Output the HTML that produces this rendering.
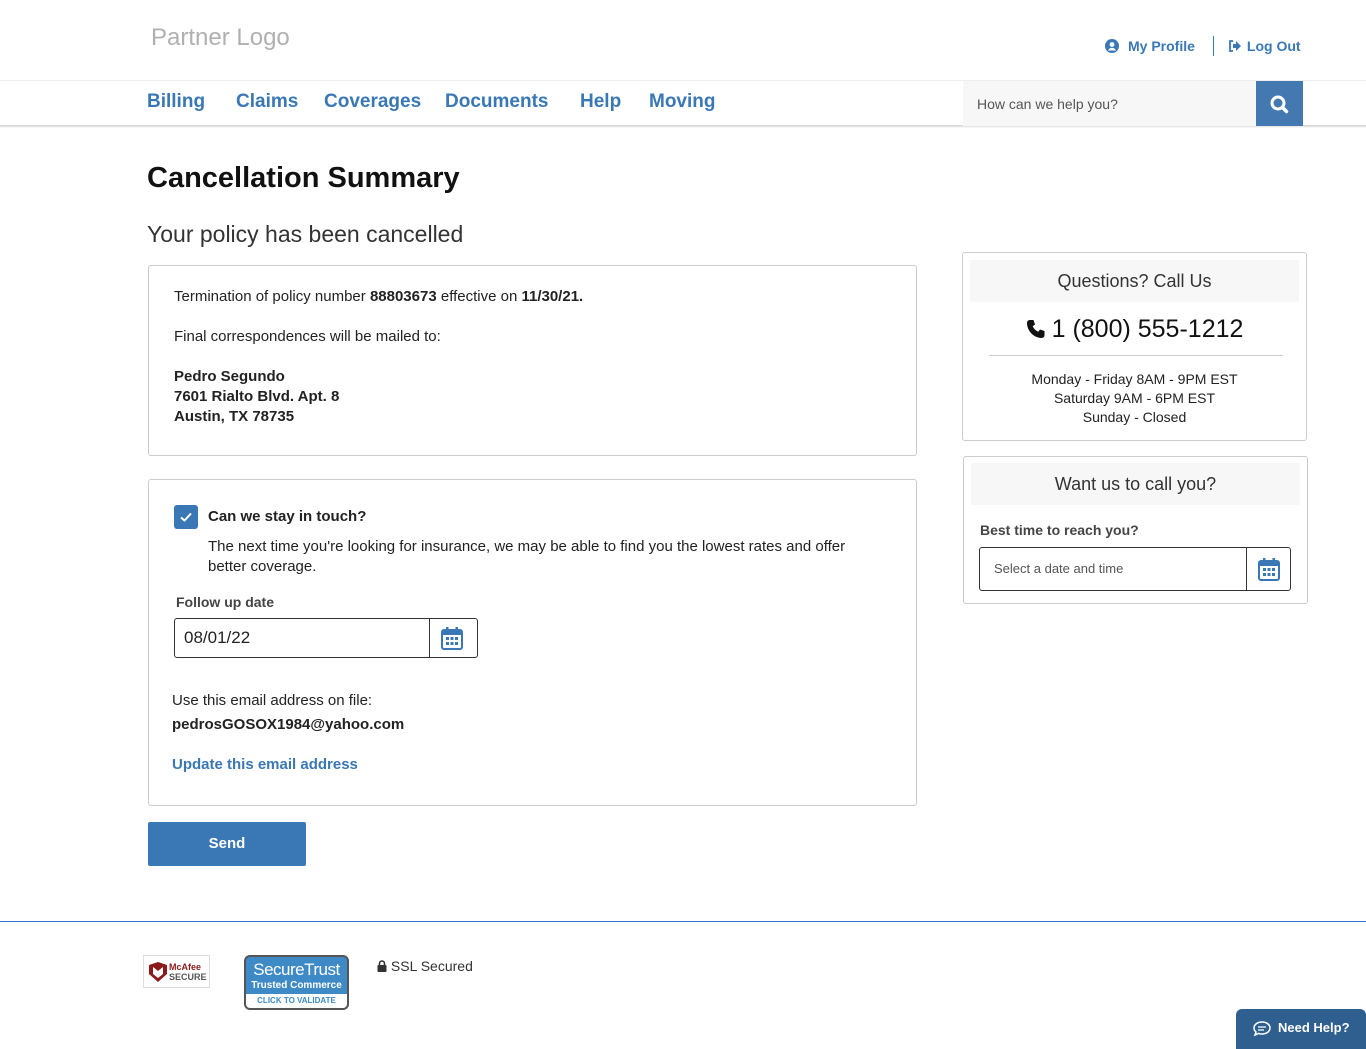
<!DOCTYPE html>
<html><head><meta charset="utf-8"><style>
*{box-sizing:border-box;margin:0;padding:0}
body{width:1366px;height:1044px;position:relative;font-family:"Liberation Sans",sans-serif;color:#222;background:#fff;overflow:hidden}
.abs{position:absolute}
.blue{color:#3a78b5}
.nav a{position:absolute;top:91px;font-size:19px;font-weight:bold;color:#3a78b5;text-decoration:none}
.box{position:absolute;border:1px solid #ccc;border-radius:3px;background:#fff}
.t15{font-size:15px;line-height:20px}
b{font-weight:bold}
</style></head><body>
<div class="abs" style="left:151px;top:24px;font-size:24px;color:#b0b0b0">Partner Logo</div>
<div class="abs blue" style="left:1105px;top:36px;font-size:14px;font-weight:bold;display:flex;align-items:center">
<svg width="14" height="14" viewBox="0 0 14 14"><circle cx="7" cy="7" r="7" fill="#3a78b5"/><circle cx="7" cy="5.5" r="2.4" fill="#fff"/><path d="M3 11.5c1-2 2.5-2.6 4-2.6s3 .6 4 2.6" fill="#fff"/></svg>
<span style="margin-left:9px">My Profile</span>
<span style="display:inline-block;width:1px;height:20px;background:#3a78b5;margin:0 14px 0 18px"></span>
<svg width="13" height="12" viewBox="0 0 13 12"><path d="M5 1H2v10h3" stroke="#3a78b5" stroke-width="1.8" fill="none"/><path d="M5 4h3V1l5 5-5 5V8H5z" fill="#3a78b5"/></svg>
<span style="margin-left:6px">Log Out</span></div>
<div class="abs" style="left:0;top:80px;width:1366px;height:1px;background:#eee"></div>
<div class="abs" style="left:0;top:125px;width:1366px;height:3px;background:linear-gradient(#ccc,#fff)"></div>
<div class="nav"><a style="left:147px">Billing</a><a style="left:236px">Claims</a><a style="left:324px">Coverages</a><a style="left:445px">Documents</a><a style="left:580px">Help</a><a style="left:649px">Moving</a></div>
<div class="abs" style="left:963px;top:81px;width:293px;height:45px;background:#f7f7f7;font-size:14px;color:#555;padding:15px 14px">How can we help you?</div>
<div class="abs" style="left:1256px;top:81px;width:47px;height:45px;background:#4478b0">
<svg width="47" height="45" viewBox="0 0 47 45"><circle cx="22" cy="22" r="6" stroke="#fff" stroke-width="3" fill="none"/><path d="M26.5 26.5l4 4" stroke="#fff" stroke-width="3.5" stroke-linecap="round"/></svg></div>
<div class="abs" style="left:147px;top:162px;font-size:29px;font-weight:bold;color:#111">Cancellation Summary</div>
<div class="abs" style="left:147px;top:221px;font-size:23px;color:#333">Your policy has been cancelled</div>
<div class="box" style="left:148px;top:265px;width:769px;height:191px"></div>
<div class="abs t15" style="left:174px;top:287px">Termination of policy number <b>88803673</b> effective on <b>11/30/21.</b></div>
<div class="abs t15" style="left:174px;top:327px">Final correspondences will be mailed to:</div>
<div class="abs t15" style="left:174px;top:367px;font-weight:bold">Pedro Segundo<br>7601 Rialto Blvd. Apt. 8<br>Austin, TX 78735</div>
<div class="box" style="left:148px;top:479px;width:769px;height:327px"></div>
<div class="abs" style="left:174px;top:505px;width:24px;height:24px;background:#3a78b5;border-radius:3px"><svg width="24" height="24"><path d="M7 12.5l3.5 3 6.5-7" stroke="#fff" stroke-width="2" fill="none"/></svg></div>
<div class="abs t15" style="left:208px;top:507px;font-weight:bold">Can we stay in touch?</div>
<div class="abs t15" style="left:208px;top:537px;width:640px">The next time you're looking for insurance, we may be able to find you the lowest rates and offer better coverage.</div>
<div class="abs" style="left:176px;top:594px;font-size:14px;font-weight:bold;color:#444">Follow up date</div>
<div class="abs" style="left:174px;top:618px;width:304px;height:40px;border:1px solid #333;border-radius:3px;font-size:17px;padding:9px 9px">08/01/22</div>
<div class="abs" style="left:429px;top:619px;width:1px;height:38px;background:#333"></div>
<svg class="abs" style="left:441px;top:626px" width="22" height="24" viewBox="0 0 22 24"><rect x="1" y="4" width="20" height="19" rx="2" fill="none" stroke="#3a78b5" stroke-width="2"/><rect x="1" y="4" width="20" height="5" fill="#3a78b5"/><rect x="5" y="1" width="2.5" height="5" fill="#3a78b5"/><rect x="14.5" y="1" width="2.5" height="5" fill="#3a78b5"/><g fill="#3a78b5"><rect x="5" y="11" width="3" height="3"/><rect x="9.5" y="11" width="3" height="3"/><rect x="14" y="11" width="3" height="3"/><rect x="5" y="16" width="3" height="3"/><rect x="9.5" y="16" width="3" height="3"/><rect x="14" y="16" width="3" height="3"/></g></svg>
<div class="abs t15" style="left:172px;top:691px">Use this email address on file:</div>
<div class="abs t15" style="left:172px;top:715px;font-weight:bold">pedrosGOSOX1984@yahoo.com</div>
<div class="abs t15 blue" style="left:172px;top:755px;font-weight:bold">Update this email address</div>
<div class="abs" style="left:148px;top:822px;width:158px;height:44px;background:#3a78b5;border-radius:2px;color:#fff;font-weight:bold;font-size:15px;text-align:center;line-height:44px">Send</div>
<div class="box" style="left:962px;top:252px;width:345px;height:189px"></div>
<div class="abs" style="left:970px;top:260px;width:329px;height:42px;background:#f7f7f7;text-align:center;font-size:18px;line-height:42px;color:#333">Questions? Call Us</div>
<div class="abs" style="left:962px;top:315px;width:345px;text-align:center;font-size:25px;color:#111"><svg width="20" height="20" viewBox="0 0 20 20" style="vertical-align:-2px;margin-right:6px"><path d="M4 1l3.5 0 1.5 4.5-2.3 1.8c1.2 2.5 3 4.3 5.5 5.5l1.8-2.3 4.5 1.5V16c0 1.5-1 3-3 3C8 19 1 12 1 4c0-2 1.5-3 3-3z" fill="#111"/></svg>1 (800) 555-1212</div>
<div class="abs" style="left:989px;top:355px;width:294px;height:1px;background:#ccc"></div>
<div class="abs" style="left:962px;top:370px;width:345px;text-align:center;font-size:14px;line-height:19px;color:#222">Monday - Friday 8AM - 9PM EST<br>Saturday 9AM - 6PM EST<br>Sunday - Closed</div>
<div class="box" style="left:963px;top:456px;width:345px;height:148px"></div>
<div class="abs" style="left:971px;top:463px;width:329px;height:42px;background:#f7f7f7;text-align:center;font-size:18px;line-height:42px;color:#333">Want us to call you?</div>
<div class="abs" style="left:980px;top:522px;font-size:14px;font-weight:bold;color:#444">Best time to reach you?</div>
<div class="abs" style="left:979px;top:547px;width:312px;height:44px;border:1px solid #333;border-radius:3px;font-size:13px;color:#555;padding:13px 14px">Select a date and time</div>
<div class="abs" style="left:1246px;top:548px;width:1px;height:42px;background:#333"></div>
<svg class="abs" style="left:1258px;top:557px" width="22" height="24" viewBox="0 0 22 24"><rect x="1" y="4" width="20" height="19" rx="2" fill="none" stroke="#3a78b5" stroke-width="2"/><rect x="1" y="4" width="20" height="5" fill="#3a78b5"/><rect x="5" y="1" width="2.5" height="5" fill="#3a78b5"/><rect x="14.5" y="1" width="2.5" height="5" fill="#3a78b5"/><g fill="#3a78b5"><rect x="5" y="11" width="3" height="3"/><rect x="9.5" y="11" width="3" height="3"/><rect x="14" y="11" width="3" height="3"/><rect x="5" y="16" width="3" height="3"/><rect x="9.5" y="16" width="3" height="3"/><rect x="14" y="16" width="3" height="3"/></g></svg>
<div class="abs" style="left:0;top:921px;width:1366px;height:1px;background:#3a78d5"></div>
<div class="abs" style="left:143px;top:955px;width:67px;height:33px;border:1px solid #ddd;background:#fff">
<svg class="abs" style="left:4px;top:5px" width="20" height="22" viewBox="0 0 20 22"><path d="M1 4l9-3 9 3v9l-9 8-9-8z" fill="#8b1a1a"/><path d="M5 6l5 4 5-4v7l-5 4-5-4z" fill="#fff"/></svg>
<div class="abs" style="left:25px;top:6px;font-size:9px;font-weight:bold;color:#8b1a1a;line-height:10px">McAfee<br><span style="color:#555">SECURE</span></div></div>
<div class="abs" style="left:244px;top:955px;width:105px;height:55px;border:2px solid #555;border-radius:6px;background:#3d8ac7;overflow:hidden;text-align:center;color:#fff">
<div style="font-size:17px;line-height:20px;margin-top:3px;letter-spacing:-.5px">SecureTrust</div>
<div style="font-size:10px;font-weight:bold;line-height:12px">Trusted Commerce</div>
<div style="position:absolute;left:0;bottom:0;width:101px;height:14px;background:#fff;color:#3d8ac7;font-size:8px;font-weight:bold;line-height:14px">CLICK TO VALIDATE</div></div>
<div class="abs" style="left:377px;top:958px;font-size:14px;color:#333"><svg width="10" height="12" viewBox="0 0 10 12" style="vertical-align:-1px"><path d="M2.5 5V3.5a2.5 2.5 0 015 0V5" stroke="#333" stroke-width="1.6" fill="none"/><rect x="0.5" y="5" width="9" height="7" rx="1" fill="#333"/></svg> SSL Secured</div>
<div class="abs" style="left:1236px;top:1009px;width:130px;height:40px;background:#2f5f8f;border-radius:6px 6px 0 0;color:#fff;font-weight:bold;font-size:13px;padding:11px 0 0 16px;display:flex;align-items:flex-start">
<svg width="20" height="17" viewBox="0 0 20 17" style="margin-right:6px"><path d="M10 2C5 2 2 5 2 8c0 1.6.8 3 2 4l-1 3 3.5-1.6c1 .4 2.2.6 3.5.6 5 0 8-3 8-6s-3-6-8-6z" stroke="#fff" stroke-width="1.5" fill="none"/><path d="M6 7h8M6 10h6" stroke="#fff" stroke-width="1.3"/></svg>Need Help?</div>
</body></html>
